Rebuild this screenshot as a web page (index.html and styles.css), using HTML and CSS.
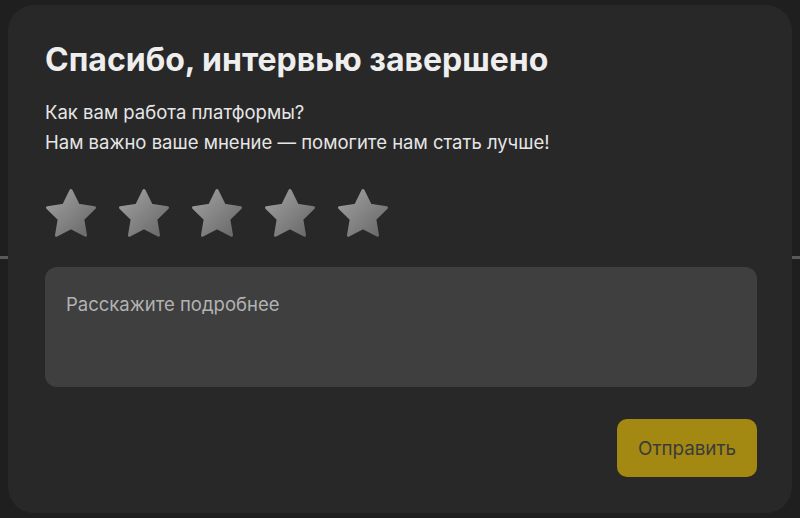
FILE: index.html
```html
<!DOCTYPE html>
<html lang="ru">
<head>
<meta charset="utf-8">
<link rel="stylesheet" href="styles.css">
</head>
<body>
<div class="backdrop-line"></div>
<div class="modal">
  <h1 class="title">Спасибо, интервью завершено</h1>
  <p class="lead">Как вам работа платформы?</p>
  <p class="lead">Нам важно ваше мнение — помогите нам стать лучше!</p>
  <div class="stars">
    <svg class="star" viewBox="0 0 24 24"><defs><linearGradient id="g" x1="0" y1="0" x2="1" y2="1"><stop offset="0" stop-color="#a2a2a2"/><stop offset="1" stop-color="#666"/></linearGradient></defs><path d="M12 2.6l2.9 5.9 6.5.95-4.7 4.6 1.1 6.45L12 17.45l-5.8 3.05 1.1-6.45-4.7-4.6 6.5-.95z" fill="url(#g)" stroke="url(#g)" stroke-width="1.2" stroke-linejoin="round"/></svg>
    <svg class="star" viewBox="0 0 24 24"><path d="M12 2.6l2.9 5.9 6.5.95-4.7 4.6 1.1 6.45L12 17.45l-5.8 3.05 1.1-6.45-4.7-4.6 6.5-.95z" fill="url(#g)" stroke="url(#g)" stroke-width="1.2" stroke-linejoin="round"/></svg>
    <svg class="star" viewBox="0 0 24 24"><path d="M12 2.6l2.9 5.9 6.5.95-4.7 4.6 1.1 6.45L12 17.45l-5.8 3.05 1.1-6.45-4.7-4.6 6.5-.95z" fill="url(#g)" stroke="url(#g)" stroke-width="1.2" stroke-linejoin="round"/></svg>
    <svg class="star" viewBox="0 0 24 24"><path d="M12 2.6l2.9 5.9 6.5.95-4.7 4.6 1.1 6.45L12 17.45l-5.8 3.05 1.1-6.45-4.7-4.6 6.5-.95z" fill="url(#g)" stroke="url(#g)" stroke-width="1.2" stroke-linejoin="round"/></svg>
    <svg class="star" viewBox="0 0 24 24"><path d="M12 2.6l2.9 5.9 6.5.95-4.7 4.6 1.1 6.45L12 17.45l-5.8 3.05 1.1-6.45-4.7-4.6 6.5-.95z" fill="url(#g)" stroke="url(#g)" stroke-width="1.2" stroke-linejoin="round"/></svg>
  </div>
  <textarea class="comment" placeholder="Расскажите подробнее"></textarea>
  <div class="actions">
    <button class="submit">Отправить</button>
  </div>
</div>
</body>
</html>
```

FILE: styles.css
```css
* { box-sizing: border-box; }
html, body { margin: 0; height: 100%; }
body {
  background: #1f1f1f;
  padding: 5px 8px;
  font-family: Inter, "Noto Sans", sans-serif;
  position: relative;
  overflow: hidden;
}
.backdrop-line {
  position: absolute;
  left: 0;
  right: 0;
  top: 256px;
  height: 3px;
  background: #5a5a5a;
}
.modal {
  position: relative;
  background: #282828;
  border-radius: 26px;
  height: 508px;
  padding: 36px 35px 36px 37px;
  display: flex;
  flex-direction: column;
}
.title {
  margin: 0 0 22px;
  font-size: 32px;
  line-height: 38px;
  font-weight: 700;
  color: #eeeeee;
  letter-spacing: 0;
}
.lead {
  margin: 0 0 8px;
  font-size: 18.5px;
  line-height: 22px;
  color: #e6e6e6;
}
.stars {
  display: flex;
  gap: 13px;
  margin: 23px 0 0 -4px;
}
.star { width: 60px; height: 60px; display: block; }
.comment {
  margin-top: 23px;
  height: 120px;
  width: 100%;
  background: #3f3f3f;
  border: none;
  border-radius: 12px;
  padding: 26px 21px;
  resize: none;
  font-family: Inter, "Noto Sans", sans-serif;
  font-size: 18.5px;
  color: #ddd;
  outline: none;
}
.comment::placeholder { color: #b3b3b3; }
.actions {
  display: flex;
  justify-content: flex-end;
  margin-top: 32px;
}
.submit {
  width: 140px;
  height: 58px;
  background: #a38812;
  border: none;
  border-radius: 10px;
  font-family: Inter, "Noto Sans", sans-serif;
  font-size: 18.8px;
  color: #3b3b3b;
}
```
